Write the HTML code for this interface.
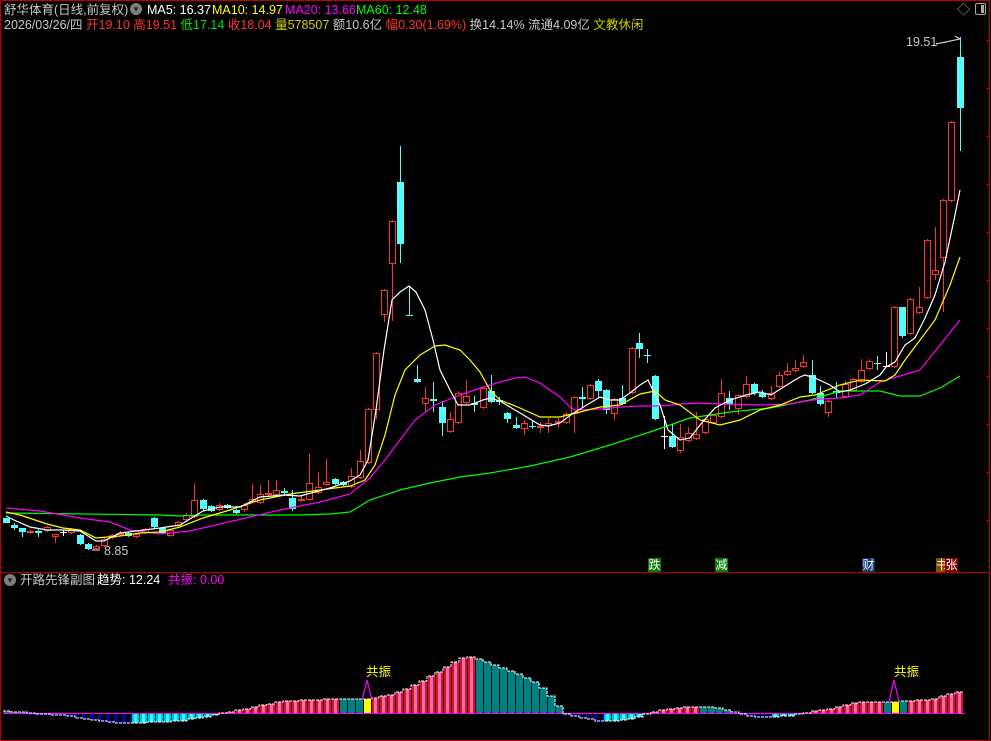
<!DOCTYPE html>
<html><head><meta charset="utf-8"><style>
body{margin:0;background:#000;width:991px;height:741px;overflow:hidden;position:relative;font-family:"Liberation Sans","Noto Sans CJK SC",sans-serif;font-size:12.5px}
.t{position:absolute;white-space:nowrap;line-height:14px}
svg{position:absolute;left:0;top:0}
.lb{position:absolute;top:558px;height:14px;font-size:12px;line-height:14px;color:#fff;text-align:center}
</style></head><body>
<svg id="s" width="991" height="741" viewBox="0 0 991 741"></svg>
<div class="t" style="left:4px;top:3px;color:#c8c8c8">舒华体育(日线,前复权)</div>
<div class="t" style="left:130px;top:3px;width:12px;height:12px;border-radius:6px;background:#808080;line-height:12px;color:#222;font-size:9px;text-align:center">▾</div>
<div class="t" style="left:147px;top:3px;color:#fff">MA5: 16.37</div>
<div class="t" style="left:212px;top:3px;color:#ffff00">MA10: 14.97</div>
<div class="t" style="left:285px;top:3px;color:#ff00ff">MA20: 13.66</div>
<div class="t" style="left:356px;top:3px;color:#00ff00">MA60: 12.48</div>
<div class="t" style="left:4px;top:18px;color:#c8c8c8">2026/03/26/四 <span style="color:#ff3232">开19.10</span> <span style="color:#ff3232">高19.51</span> <span style="color:#00e000">低17.14</span> <span style="color:#ff3232">收18.04</span> <span style="color:#d0d000">量578507</span> 额10.6亿 <span style="color:#ff3232">幅0.30(1.69%)</span> 换14.14% 流通4.09亿 <span style="color:#d0d000">文教休闲</span></div>
<div class="t" style="left:957px;top:3px;color:#aaa;font-size:13px">◇</div>
<div class="t" style="left:975px;top:3px;width:9px;height:10px;border:1px solid #aaa;border-radius:2px"><div style="position:absolute;right:1px;top:1px;width:3px;height:8px;background:#aaa"></div></div>
<div class="t" style="left:906px;top:35px;color:#c8c8c8">19.51</div>
<div class="t" style="left:104px;top:544px;color:#c8c8c8">8.85</div>
<div class="lb" style="left:648px;width:13px;background:#0a7a0a">跌</div>
<div class="lb" style="left:715px;width:13px;background:#0a7a0a">减</div>
<div class="lb" style="left:862px;width:13px;background:#0a3a70">财</div>
<div class="lb" style="left:936px;width:10px;background:#8a4a00;overflow:hidden">书</div>
<div class="lb" style="left:945px;width:13px;background:#800000">张</div>
<div class="t" style="left:4px;top:574px;width:12px;height:12px;border-radius:6px;background:#808080;line-height:12px;color:#222;font-size:9px;text-align:center">▾</div>
<div class="t" style="left:20px;top:573px;color:#c8c8c8">开路先锋副图</div>
<div class="t" style="left:97px;top:573px;color:#fff">趋势: 12.24</div>
<div class="t" style="left:168px;top:573px;color:#ff00ff">共振: 0.00</div>
<div class="t" style="left:366px;top:665px;color:#ffff00">共振</div>
<div class="t" style="left:894px;top:665px;color:#ffff00">共振</div>
<script>
var s=document.getElementById('s'),h='';
function L(x1,y1,x2,y2,c){h+='<line x1="'+x1+'" y1="'+y1+'" x2="'+x2+'" y2="'+y2+'" stroke="'+c+'" stroke-width="1"/>';}
h+='<rect x="0.5" y="0.5" width="989" height="740" fill="none" stroke="#c00000"/>';
L(0,572.5,990,572.5,'#c00000');
for(var y=40;y<560;y+=48)L(986,y+.5,990,y+.5,'#c00000');
var C=[[6,518,523,518,523,'c'],[14,525,528,523,530,'c'],[22,528,532,528,537,'c'],[30,531,533,530,534,'r'],[38,531,533,529,537,'c'],[47,527,531,526,532,'r'],[55,534,537,534,543,'r'],[63,532,533,530,536,'w'],[71,529,533,528,534,'r'],[80,535,544,534,545,'c'],[88,544,549,543,550,'c'],[96,546,549,545,549,'r'],[104,539,546,538,547,'r'],[112,535,538,534,539,'r'],[120,533,535,531,536,'r'],[128,533,536,532,537,'c'],[136,534,537,533,538,'r'],[145,529,533,528,534,'r'],[154,518,527,517,528,'c'],[162,528,533,527,534,'c'],[170,530,536,529,537,'r'],[178,522,526,521,527,'r'],[186,515,520,513,521,'r'],[194,500,517,483,518,'r'],[203,500,509,499,511,'c'],[211,506,511,505,512,'c'],[219,505,510,503,511,'r'],[227,505,508,504,509,'c'],[236,510,513,509,514,'c'],[244,505,510,503,512,'r'],[252,499,502,484,503,'r'],[260,494,503,485,504,'r'],[268,493,495,480,496,'r'],[276,490,495,480,496,'r'],[284,491,493,488,496,'c'],[292,498,509,490,511,'c'],[301,499,501,495,502,'r'],[309,483,500,454,501,'r'],[318,487,493,472,494,'r'],[326,482,485,459,486,'r'],[335,479,484,478,485,'c'],[343,482,485,481,486,'c'],[351,476,487,468,488,'r'],[360,461,478,450,479,'r'],[368,409,463,408,464,'r'],[376,353,410,352,419,'r'],[384,290,315,289,322,'r'],[392,221,264,220,321,'r'],[400,182,244,146,263,'c'],[409,315,316,286,316,'c'],[417,379,382,365,383,'c'],[425,398,404,387,412,'r'],[433,399,401,382,412,'c'],[442,407,423,401,436,'c'],[450,419,432,412,433,'r'],[458,393,423,391,424,'r'],[466,396,403,380,404,'r'],[474,403,405,396,412,'c'],[483,388,408,387,409,'r'],[491,391,402,375,403,'c'],[499,400,402,397,405,'c'],[507,413,419,412,423,'c'],[516,425,428,417,429,'c'],[524,423,429,420,435,'r'],[532,426,427,421,429,'c'],[540,426,427,422,433,'r'],[548,423,426,418,433,'r'],[558,421,423,418,428,'r'],[566,414,423,412,424,'r'],[574,397,414,396,433,'r'],[582,397,399,387,407,'c'],[590,385,399,384,400,'r'],[598,381,391,379,397,'c'],[606,390,410,389,414,'c'],[614,399,414,398,420,'r'],[622,398,404,385,405,'c'],[632,348,393,347,394,'r'],[639,343,349,333,358,'c'],[647,355,356,349,363,'c'],[655,376,419,375,420,'c'],[664,436,437,416,449,'w'],[672,436,447,424,448,'c'],[680,437,451,424,453,'r'],[688,433,441,427,442,'r'],[696,434,439,412,440,'r'],[705,419,433,418,434,'r'],[713,415,423,414,424,'r'],[721,393,417,379,418,'r'],[729,398,404,391,410,'c'],[738,395,409,394,415,'r'],[746,384,397,376,398,'r'],[754,384,393,383,395,'c'],[762,393,397,390,398,'c'],[771,393,399,386,400,'r'],[779,375,387,372,388,'r'],[787,371,375,363,376,'r'],[795,368,371,360,372,'r'],[803,362,367,355,368,'r'],[812,375,393,360,394,'c'],[820,393,404,386,406,'c'],[828,401,413,400,417,'r'],[836,391,393,382,398,'c'],[845,384,397,381,398,'r'],[853,379,391,378,392,'r'],[861,370,382,359,383,'r'],[869,361,369,359,370,'r'],[877,363,364,356,370,'c'],[886,366,367,352,367,'w'],[894,307,367,306,368,'r'],[902,307,336,307,338,'c'],[910,299,334,298,335,'r'],[919,307,313,287,314,'r'],[927,240,298,239,299,'r'],[935,270,275,227,280,'r'],[943,200,258,199,312,'r'],[951,122,201,121,202,'r'],[960,57,108,37,151,'c']];
C.forEach(function(c){var x=c[0],col=c[5]=='r'?'#ff3232':c[5]=='c'?'#54fcfc':'#ffffff';
L(x+.5,c[3],x+.5,c[4],col);
if(c[5]=='r')h+='<rect x="'+(x-2.5)+'" y="'+(c[1]+.5)+'" width="6" height="'+Math.max(1,c[2]-c[1]-1)+'" fill="#000" stroke="#ff3232"/>';
else h+='<rect x="'+(x-3)+'" y="'+c[1]+'" width="7" height="'+Math.max(1,c[2]-c[1])+'" fill="'+col+'"/>';});
function P(pts,c){h+='<polyline fill="none" stroke="'+c+'" stroke-width="1.2" points="'+pts+'"/>';}
P('6,513 160,515 180,516 200,515 240,515 300,515 330,514 350,512 370,500 400,490 430,483 460,477 490,473 530,466 570,457 610,445 650,432 690,418 730,412 770,408 810,400 840,391 860,391 880,391 900,396 920,396 940,388 960,376','#00ff00');
P('6,508 40,511 80,518 110,522 130,530 160,534 190,531 220,524 250,517 280,510 320,502 350,494 370,478 385,460 400,440 415,420 435,405 460,395 480,388 500,382 515,378 525,377 540,383 560,397 570,407 575,410 600,409 620,407 640,406 660,406 680,404 700,403 720,404 760,405 790,404 800,402 820,399 840,398 860,395 880,382 900,376 920,370 940,345 960,320','#ff00ff');
P('6,512 20,515 47,524 63,528 80,530 96,538 120,536 140,533 160,532 180,527 203,518 230,510 260,500 290,494 320,490 350,486 365,480 375,465 385,435 395,395 405,370 420,355 435,346 445,345 460,350 470,360 480,372 490,390 500,400 520,408 540,417 560,417 580,412 600,407 620,405 640,394 655,391 665,400 680,405 700,420 720,425 740,420 760,410 780,405 800,397 815,395 840,385 860,380 885,381 895,375 905,360 920,340 935,320 950,285 960,257','#ffff00');
P('6,516 14,520 30,527 47,530 63,530 80,531 96,541 104,541 120,533 136,531 160,528 180,525 203,511 220,507 240,507 260,497 284,495 300,496 330,488 350,481 360,475 368,460 376,410 384,350 392,300 400,292 409,286 416,292 425,310 433,340 440,370 450,390 458,405 470,405 483,400 490,398 500,401 520,413 540,425 548,426 560,423 572,414 590,403 600,397 610,400 620,400 630,393 640,385 648,380 660,405 668,430 680,440 690,438 700,425 715,408 730,400 746,395 760,392 771,395 790,383 800,377 805,375 815,378 830,385 840,392 850,390 865,384 880,375 886,367 895,362 905,345 915,338 925,318 935,295 945,262 955,215 960,190','#ffffff');
P('936,44 960,39 955,36','#c8c8c8');P('100,550 92,550','#c8c8c8');
var V=[[4,711],[30,713],[60,715],[90,719],[120,723],[140,723],[180,721],[210,716],[225,713],[240,710],[260,706],[280,702],[300,700],[340,699],[370,699],[390,695],[410,688],[430,677],[450,665],[465,657],[472,657],[480,659],[500,667],[516,673],[532,680],[548,692],[557,703],[563,713],[580,717],[600,721],[620,721],[640,717],[650,713],[670,709],[690,707],[710,707],[730,710],[740,714],[760,717],[790,716],[805,713],[830,709],[860,702],[885,702],[930,700],[963,691]];
function val(x){for(var i=1;i<V.length;i++)if(x<=V[i][0]){var a=V[i-1],b=V[i];return a[1]+(b[1]-a[1])*(x-a[0])/(b[0]-a[0]);}return 691;}
var R=[[30,'t'],[130,'b'],[225,'c'],[340,'r'],[362,'t'],[370,'y'],[476,'r'],[565,'t'],[600,'b'],[650,'c'],[700,'r'],[735,'t'],[775,'b'],[805,'c'],[885,'r'],[890,'t'],[898,'y'],[906,'t'],[970,'r']];
function col(x){for(var i=0;i<R.length;i++)if(x<R[i][0])return R[i][1];return 'r';}
var B=713,line='';
for(var x=7;x<=963;x+=8){var v=Math.round(val(x)),k=col(x),t=Math.min(v,B),hh=Math.max(1,Math.abs(v-B));
line+=(x-4)+','+v+' '+(x+4)+','+v+' ';
if(k=='r'){h+='<rect x="'+(x-3)+'" y="'+t+'" width="7" height="'+hh+'" fill="#d8102c"/><rect x="'+(x-1)+'" y="'+t+'" width="3" height="'+hh+'" fill="#ff6aa8"/>';}
else if(k=='c'){h+='<rect x="'+(x-3)+'" y="'+t+'" width="7" height="'+hh+'" fill="#00c8e8"/><rect x="'+(x-1)+'" y="'+t+'" width="3" height="'+hh+'" fill="#30ffff"/>';}
else if(k=='b'){h+='<rect x="'+(x-2.5)+'" y="'+(t+.5)+'" width="6" height="'+Math.max(1,hh-1)+'" fill="none" stroke="#0000ff"/>';}
else if(k=='t'){h+='<rect x="'+(x-3)+'" y="'+t+'" width="7" height="'+hh+'" fill="#008080"/>';}
else {h+='<rect x="'+(x-3)+'" y="'+t+'" width="7" height="'+hh+'" fill="#ffff00"/>';}}
L(3,713.5,965,713.5,'#ff00ff');
h+='<polyline fill="none" stroke="#fff" stroke-width="1" stroke-dasharray="3,1" points="'+line+'"/>';
P('362,700 367,680 372,700','#ff00ff');P('889,702 894,680 899,702','#ff00ff');
s.innerHTML=h;
</script>
</body></html>
